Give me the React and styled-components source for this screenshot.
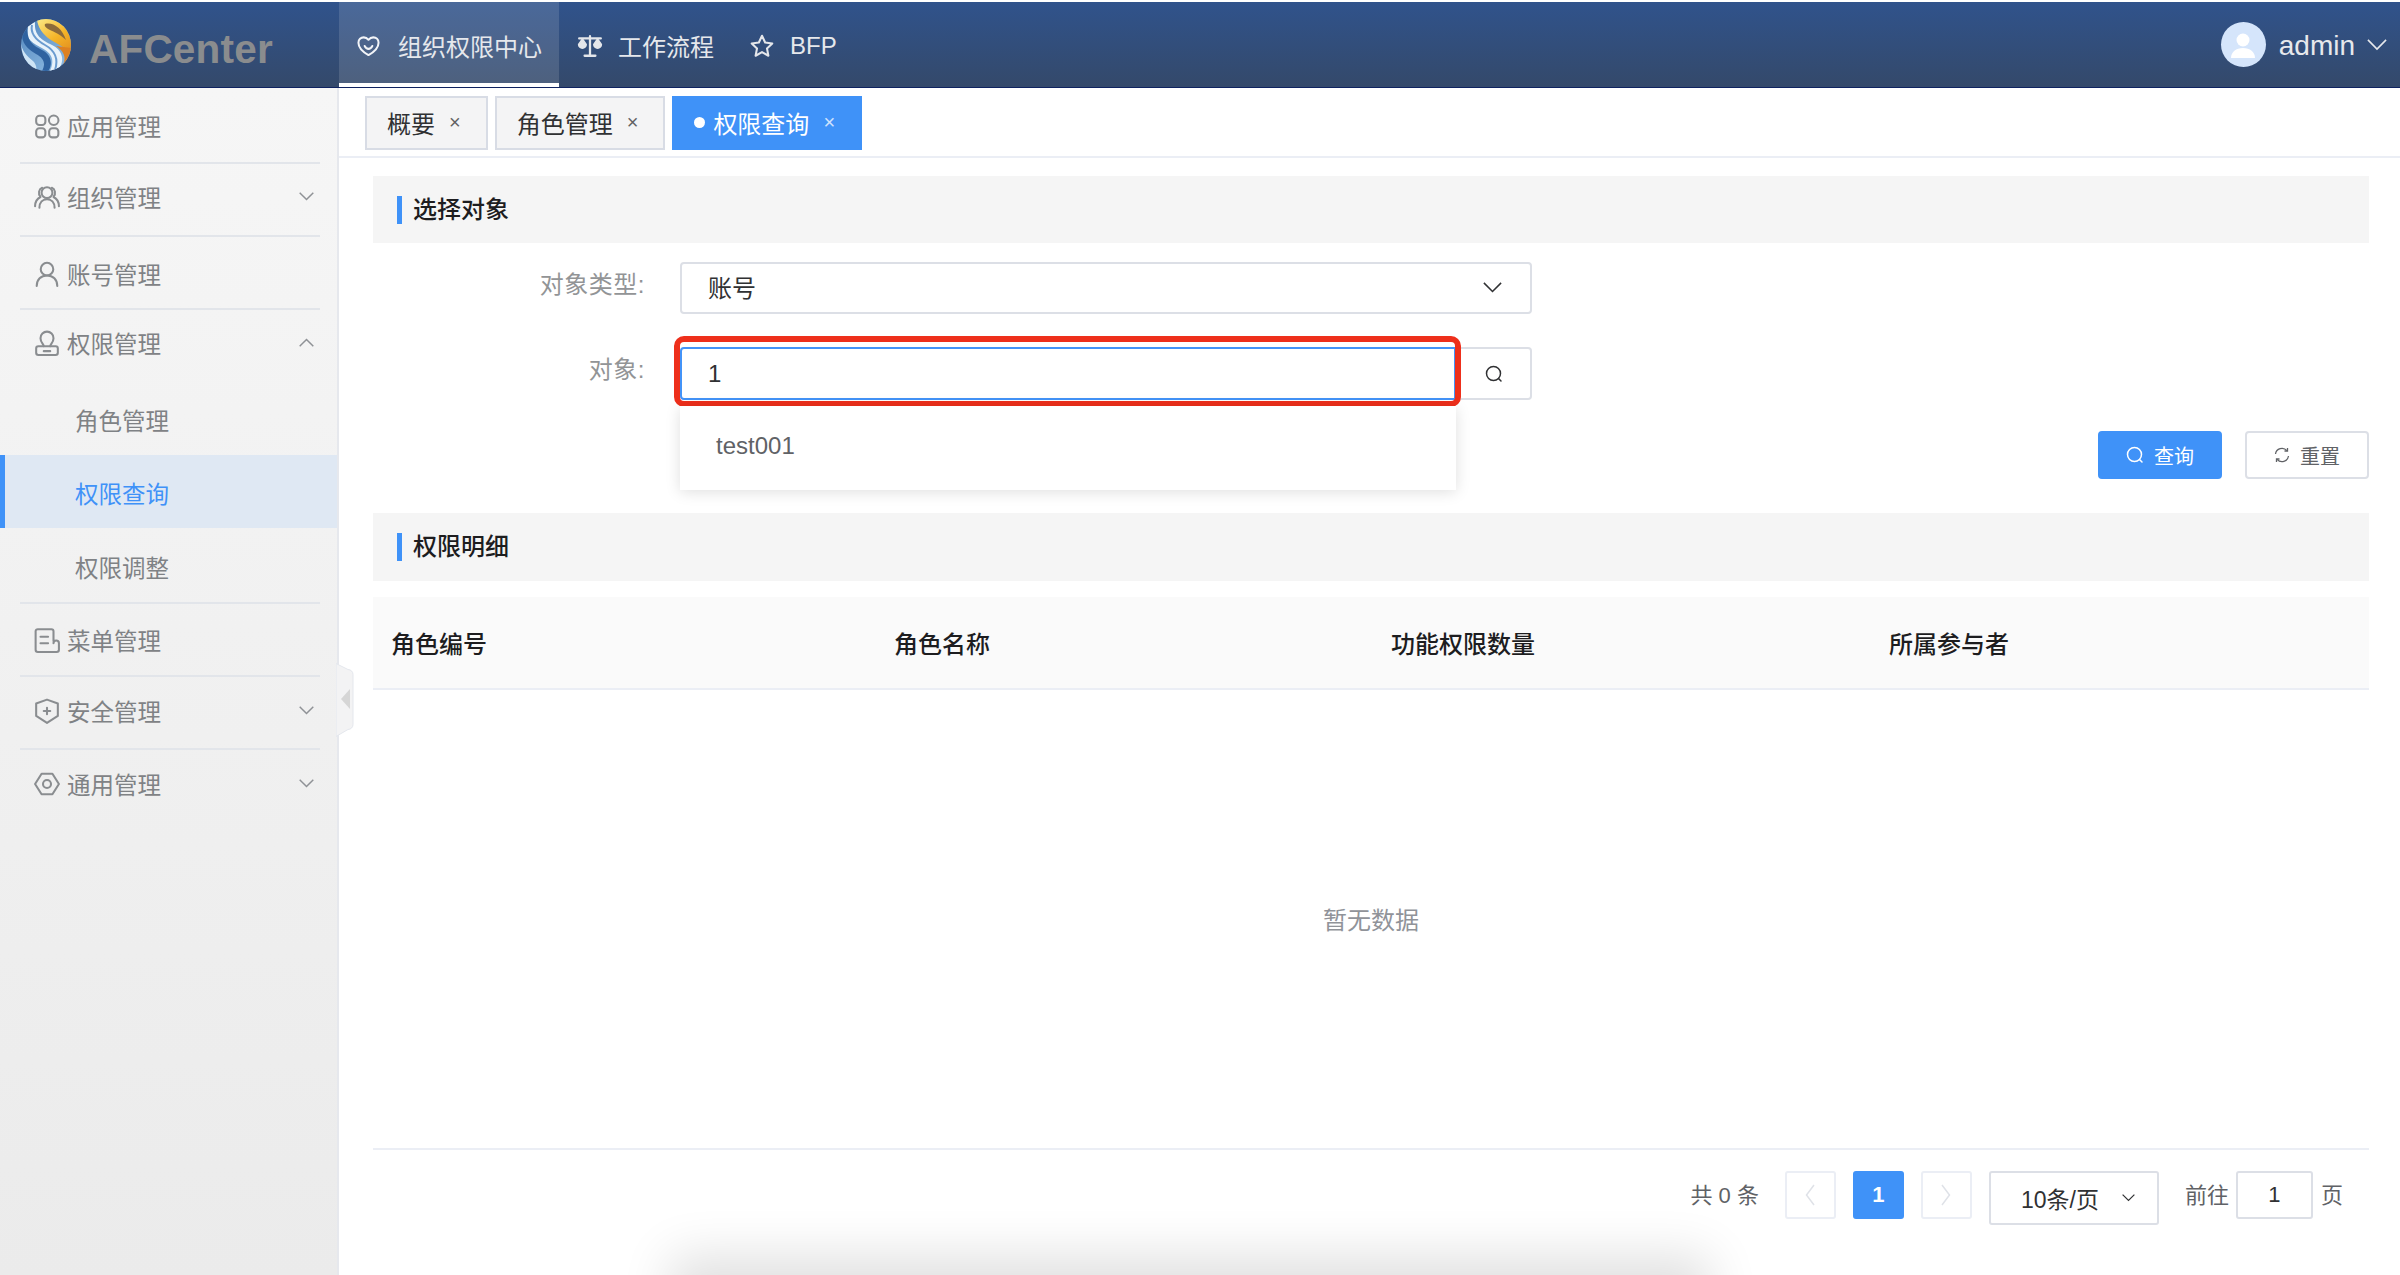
import React from "react";
import styled, { createGlobalStyle } from "styled-components";

const Global = createGlobalStyle`
  html, body {
    margin: 0;
    padding: 0;
    background: #fff;
    overflow: hidden;
  }
  body {
    font-family: "Liberation Sans", "Noto Sans CJK SC", sans-serif;
    font-size: 24px;
    color: #303133;
  }
  * {
    box-sizing: border-box;
  }
`;

const LogoMark = () => (
  <svg width="52" height="54" viewBox="0 0 52 54">
    <defs>
      <clipPath id="ball">
        <ellipse cx="26" cy="27" rx="25" ry="26" />
      </clipPath>
      <linearGradient id="gold" x1="0.2" y1="0" x2="0.8" y2="1">
        <stop offset="0" stopColor="#fbe27a" />
        <stop offset="0.5" stopColor="#f4b428" />
        <stop offset="1" stopColor="#e08a1e" />
      </linearGradient>
      <linearGradient id="sky" x1="0" y1="0" x2="0.8" y2="1">
        <stop offset="0" stopColor="#4f83bb" />
        <stop offset="1" stopColor="#8fbce4" />
      </linearGradient>
    </defs>
    <g clipPath="url(#ball)">
      <rect width="52" height="54" fill="url(#sky)" />
      <path d="M17 2C24-2 44 0 52 20v20C46 28 36 26 28 20C22 15 18 9 17 2z" fill="url(#gold)" />
      <path d="M25 6c8-2 17 4 21 16c-6-6-12-8-16-10c-4-2-6-4-5-6z" fill="#8c6a3a" />
      <path d="M36 28c10 6 12 16 2 25l14 1V30z" fill="#dd8122" />
      <path d="M8 8C4 18 10 24 20 29c10 5 16 11 10 24l8-1c8-10 4-20-6-25C22 22 14 18 15 4z" fill="#e8f2fa" />
      <path d="M12 7C10 16 16 22 25 27c9 5 14 13 10 25" fill="none" stroke="#6a9bcf" strokeWidth="2" />
      <path d="M2 18c1 10 8 14 14 18c8 4 10 10 6 17l6 1c6-10 2-18-6-22C12 27 6 22 8 8z" fill="#2f62a0" />
      <path d="M1 26c2 10 9 14 13 18c2 3 3 6 2 9C8 50 2 40 1 26z" fill="#cfe4f5" />
    </g>
  </svg>
);

const HeartIcon = () => (
  <svg width="26" height="26" viewBox="0 0 24 24" fill="none" stroke="#f2f4f8" strokeWidth="2.1" strokeLinecap="round" strokeLinejoin="round">
    <path d="M12 21.5C6 18 1.5 14 1.5 8.5C1.5 5 4 3 7 3c2 0 3.800 1 5 2.500C13.200 4 15 3 17 3c3 0 5.500 2 5.500 5.500C22.500 14 18 18 12 21.500z" />
    <path d="M8 12c1 2 2.500 3 4 3s3-1 4-3" />
  </svg>
);

const ScaleIcon = () => (
  <svg width="26" height="26" viewBox="0 0 24 24" fill="none" stroke="#e4e6ea" strokeWidth="2.1" strokeLinecap="round" strokeLinejoin="round">
    <path d="M2 5h20M12 3v18M7 21h10" />
    <path d="M1.500 10.500a3.500 3.500 0 0 0 7 0L5 5.500zM15.500 10.500a3.500 3.500 0 0 0 7 0L19 5.500z" fill="#e4e6ea" strokeWidth="1.400" />
  </svg>
);

const StarIcon = () => (
  <svg width="26" height="26" viewBox="0 0 24 24" fill="none" stroke="#e4e6ea" strokeWidth="1.900" strokeLinejoin="round">
    <path d="M12 2.500l2.900 6.300 6.600.8-4.900 4.600 1.300 6.800L12 17.600 6.100 21l1.300-6.800L2.500 9.600l6.600-.8z" />
  </svg>
);

const MenuSvg = ({ children }) => (
  <svg width="26" height="26" viewBox="0 0 24 24" fill="none" stroke="#8a8d90" strokeWidth="1.900" strokeLinecap="round" strokeLinejoin="round">
    {children}
  </svg>
);

const menuIcons = {
  apps: (
    <>
      <rect x="2" y="2.500" width="8.500" height="8.500" rx="3" />
      <rect x="2" y="14" width="8.500" height="8.500" rx="3" />
      <rect x="14" y="14" width="8.500" height="8.500" rx="3" />
      <circle cx="18.200" cy="6.700" r="4.400" />
    </>
  ),
  team: (
    <>
      <circle cx="12" cy="8" r="5" />
      <path d="M5 22c0-5 3-8 7-8s7 3 7 8" />
      <path d="M7.500 3.500C4.500 4.500 3.500 9 6 12c-3 1.500-5 4.500-5 8.500M16.500 3.500c3 1 4 5.500 1.500 8.500 3 1.500 5 4.500 5 8.500" />
    </>
  ),
  user: (
    <>
      <circle cx="12" cy="7.500" r="5.800" />
      <path d="M2.500 23c0-6 4-9.700 9.500-9.700s9.500 3.700 9.500 9.700" />
    </>
  ),
  stamp: (
    <>
      <path d="M9 15c0-2-3-3.500-3-7.500a6 6 0 0 1 12 0c0 4-3 5.500-3 7.500" />
      <rect x="2" y="15" width="20" height="8" rx="2" />
      <path d="M9 19.500h6" />
    </>
  ),
  doc: (
    <>
      <path d="M18 13V4a2 2 0 0 0-2-2H3.500a2 2 0 0 0-2 2v17a2 2 0 0 0 2 2H21a2 2 0 0 0 2-2v-6a2 2 0 0 0-5 0" />
      <path d="M6 9h7M6 15h7" />
    </>
  ),
  shield: (
    <>
      <path d="M12 1.500l10 3.500v11.500L12 23 2 16.500V5z" />
      <path d="M12 9v6M9 12h6" />
    </>
  ),
  nut: (
    <>
      <path d="M7 2.500h10l6 9.500-6 9.500H7L1 12z" />
      <circle cx="12" cy="12" r="3.700" />
    </>
  ),
};

const Chevron = ({ up, size = 15, color = "#8f9296", width = 1.5 }) => (
  <svg width={size} height={size * 0.6} viewBox="0 0 15 9" fill="none" stroke={color} strokeWidth={width}>
    <path d={up ? "M.7 8.300 7.500 1.500l6.800 6.800" : "M.7.700l6.800 6.800L14.300.700"} />
  </svg>
);

const SearchIcon = ({ color }) => (
  <svg width="18" height="18" viewBox="0 0 18 18" fill="none" stroke={color} strokeWidth="1.500" strokeLinecap="round">
    <circle cx="8.500" cy="8.500" r="7" />
    <path d="M13.500 13.500l2.500 2.500" />
  </svg>
);

const RefreshIcon = () => (
  <svg width="16" height="16" viewBox="0 0 16 16" fill="none" stroke="#606266" strokeWidth="1.300">
    <path d="M1.500 7a6.500 6.500 0 0 1 11.400-3.300" />
    <path d="M14.500 9a6.500 6.500 0 0 1-11.400 3.300" />
    <path d="M13.500 1v3h-3M2.500 15v-3h3" />
  </svg>
);

const menu = [
  { label: "应用管理", icon: "apps", lift: 1 },
  { label: "组织管理", icon: "team", arrow: "down", lift: 6 },
  { label: "账号管理", icon: "user", drop: 2 },
  { label: "权限管理", icon: "stamp", arrow: "up", lift: 6, noLine: true },
  { label: "角色管理", sub: true, drop: 3, noLine: true },
  { label: "权限查询", sub: true, active: true, drop: 2, noLine: true },
  { label: "权限调整", sub: true, drop: 3, tall: true },
  { label: "菜单管理", icon: "doc" },
  { label: "安全管理", icon: "shield", arrow: "down", lift: 4 },
  { label: "通用管理", icon: "nut", arrow: "down", lift: 4, noLine: true },
];

const columns = ["角色编号", "角色名称", "功能权限数量", "所属参与者"];

export default function App() {
  return (
    <Page>
      <Global />
      <Header>
        <Brand>
          <LogoMark />
          <BrandName>AFCenter</BrandName>
        </Brand>
        <Nav>
          <NavItem $active>
            <HeartIcon />
            组织权限中心
          </NavItem>
          <NavItem>
            <ScaleIcon />
            工作流程
          </NavItem>
          <NavItem>
            <StarIcon />
            BFP
          </NavItem>
        </Nav>
        <Account>
          <Avatar>
            <svg width="30" height="30" viewBox="0 0 30 30" fill="#fff">
              <circle cx="15" cy="9" r="6.500" />
              <path d="M3 27c0-6 5-10 12-10s12 4 12 10z" />
            </svg>
          </Avatar>
          <AccountName>admin</AccountName>
          <Chevron size={20} color="#e6e8ec" width={1.2} />
        </Account>
      </Header>
      <Main>
        <Sidebar>
          {menu.map((item) => (
            <MenuRow
              key={item.label}
              $active={item.active}
              $sub={item.sub}
              $noLine={item.noLine}
              $tall={item.tall}
              $lift={item.lift}
              $drop={item.drop}
            >
              {item.icon && <MenuSvg>{menuIcons[item.icon]}</MenuSvg>}
              {item.label}
              {item.arrow && (
                <MenuArrow>
                  <Chevron up={item.arrow === "up"} />
                </MenuArrow>
              )}
            </MenuRow>
          ))}
          <Collapse>
            <svg width="18" height="74" viewBox="0 0 18 74">
              <path d="M0 .5l12 6a5 5 0 0 1 5 5v50a5 5 0 0 1-5 5L0 73.500z" fill="#f3f3f4" stroke="#e4e7ed" />
              <path d="M14 26v20L5 36z" fill="#d6d6d6" />
            </svg>
          </Collapse>
        </Sidebar>
        <Content>
          <TabBar>
            <Tab>
              概要
              <TabClose>×</TabClose>
            </Tab>
            <Tab>
              角色管理
              <TabClose>×</TabClose>
            </Tab>
            <Tab $active>
              <TabDot />
              权限查询
              <TabClose>×</TabClose>
            </Tab>
          </TabBar>
          <Body>
            <SectionBar>
              <SectionTitle>选择对象</SectionTitle>
            </SectionBar>
            <FormRow>
              <FormLabel>对象类型:</FormLabel>
              <SelectBox>
                <SelectValue>账号</SelectValue>
                <Chevron size={19} color="#303133" width={1.2} />
              </SelectBox>
            </FormRow>
            <FormRow $gap={33}>
              <FormLabel>对象:</FormLabel>
              <SearchField>
                <SearchInput>1</SearchInput>
                <SearchButton>
                  <SearchIcon color="#303133" />
                </SearchButton>
                <Highlight />
                <Suggestions>test001</Suggestions>
              </SearchField>
            </FormRow>
            <Actions>
              <ActionButton $primary>
                <SearchIcon color="#fff" />
                查询
              </ActionButton>
              <ActionButton>
                <RefreshIcon />
                重置
              </ActionButton>
            </Actions>
            <SectionBar $detail>
              <SectionTitle>权限明细</SectionTitle>
            </SectionBar>
            <TableHead>
              {columns.map((name) => (
                <span key={name}>{name}</span>
              ))}
            </TableHead>
            <EmptyState>暂无数据</EmptyState>
            <Pagination>
              <Total>共 0 条</Total>
              <PageButton>
                <svg width="10" height="22" viewBox="0 0 10 22" fill="none" stroke="#dfe2e8" strokeWidth="1.500">
                  <path d="M9 1L1.500 11 9 21" />
                </svg>
              </PageButton>
              <PageButton $current>1</PageButton>
              <PageButton>
                <svg width="10" height="22" viewBox="0 0 10 22" fill="none" stroke="#dfe2e8" strokeWidth="1.500">
                  <path d="M1 1l7.500 10L1 21" />
                </svg>
              </PageButton>
              <PageSize>
                10条/页
                <Chevron size={13} color="#303133" width={1.4} />
              </PageSize>
              <JumpText>前往</JumpText>
              <JumpInput>1</JumpInput>
              <JumpText>页</JumpText>
            </Pagination>
          </Body>
        </Content>
      </Main>
      <BottomGlow />
    </Page>
  );
}

const Page = styled.div`
  display: flex;
  flex-direction: column;
  height: 1275px;
  overflow: hidden;
  padding-top: 2px;
  position: relative;
  width: 2400px;
`;

const Header = styled.header`
  align-items: stretch;
  background: linear-gradient(#30538c, #34496a);
  border-bottom: 1px solid #0e2260;
  display: flex;
  flex: none;
  height: 86px;
`;

const Brand = styled.div`
  align-items: center;
  display: flex;
  flex: none;
  gap: 17px;
  padding-left: 20px;
  width: 339px;
`;

const BrandName = styled.span`
  color: #8a8c8e;
  font-size: 40.500px;
  font-weight: 700;
  letter-spacing: 0.200px;
  padding-top: 10px;
`;

const Nav = styled.nav`
  display: flex;
`;

const NavItem = styled.div`
  align-items: center;
  background: ${({ $active }) => ($active ? "rgba(255, 255, 255, 0.13)" : "none")};
  border-bottom: ${({ $active }) => ($active ? "4px solid #fff" : "4px solid transparent")};
  color: #e6e8ec;
  display: flex;
  font-size: 24px;
  gap: ${({ $active }) => ($active ? "18px" : "15px")};
  padding: 6px 17px 0 18px;
  white-space: nowrap;
  width: ${({ $active }) => ($active ? "220px" : "auto")};
`;

const Account = styled.div`
  align-items: center;
  display: flex;
  margin-left: auto;
  padding-right: 13px;
`;

const Avatar = styled.div`
  align-items: flex-end;
  background: #d5e5fb;
  border-radius: 50%;
  display: flex;
  height: 45px;
  justify-content: center;
  overflow: hidden;
  padding-bottom: 6px;
  width: 45px;
`;

const AccountName = styled.span`
  color: #e6e8ec;
  font-size: 28px;
  margin: 0 12px 0 13px;
  padding-top: 2px;
`;

const Main = styled.div`
  display: flex;
  flex: 1;
  min-height: 0;
`;

const Sidebar = styled.aside`
  background: linear-gradient(#f6f6f6, #ebebeb);
  border-right: 2px solid #e6e8ed;
  flex: none;
  padding-top: 2px;
  position: relative;
  width: 339px;
`;

const MenuRow = styled.div`
  align-items: center;
  background: ${({ $active }) => ($active ? "#dfe8f3" : "none")};
  color: ${({ $active }) => ($active ? "#3f92f8" : "#7f8285")};
  display: flex;
  font-size: 23.500px;
  gap: 7px;
  height: ${({ $tall }) => ($tall ? "75px" : "73px")};
  padding: ${({ $drop }) => $drop || 0}px 0 ${({ $lift }) => $lift || 0}px ${({ $sub }) => ($sub ? "75px" : "34px")};
  position: relative;
  &::before {
    background: #3f92f8;
    bottom: 0;
    content: "";
    display: ${({ $active }) => ($active ? "block" : "none")};
    left: 0;
    position: absolute;
    top: 0;
    width: 5px;
  }
  &::after {
    background: #e2e5ea;
    bottom: -1px;
    content: "";
    display: ${({ $noLine }) => ($noLine ? "none" : "block")};
    height: 2px;
    left: 20px;
    position: absolute;
    right: 17px;
  }
`;

const MenuArrow = styled.span`
  display: flex;
  margin-left: auto;
  padding-right: 23px;
`;

const Collapse = styled.div`
  display: flex;
  left: 336px;
  position: absolute;
  top: 575px;
`;

const Content = styled.div`
  display: flex;
  flex: 1;
  flex-direction: column;
  min-width: 0;
`;

const TabBar = styled.div`
  align-items: flex-start;
  border-bottom: 2px solid #ebeef5;
  display: flex;
  flex: none;
  gap: 7px;
  height: 70px;
  padding: 8px 0 0 26px;
`;

const Tab = styled.div`
  align-items: center;
  background: ${({ $active }) => ($active ? "#3f92f8" : "#f4f4f5")};
  border: 2px solid ${({ $active }) => ($active ? "#3f92f8" : "#d8dce5")};
  color: ${({ $active }) => ($active ? "#fff" : "#303133")};
  display: flex;
  font-size: 24px;
  height: 54px;
  padding: 0 25px 2px 20px;
`;

const TabClose = styled.span`
  font-size: 20px;
  margin-left: 14px;
  opacity: 0.75;
`;

const TabDot = styled.span`
  background: #fff;
  border-radius: 50%;
  height: 11px;
  margin-right: 8px;
  width: 11px;
`;

const Body = styled.main`
  display: flex;
  flex: 1;
  flex-direction: column;
  min-height: 0;
  padding: 18px 31px 0 34px;
`;

const SectionBar = styled.div`
  align-items: center;
  background: #f5f5f5;
  display: flex;
  flex: none;
  height: ${({ $detail }) => ($detail ? "68px" : "67px")};
  margin-top: ${({ $detail }) => ($detail ? "34px" : "0")};
  padding-left: 24px;
`;

const SectionTitle = styled.h2`
  border-left: 5px solid #3f92f8;
  color: #1d1d1f;
  font-size: 24px;
  font-weight: 500;
  line-height: 28px;
  margin: 0;
  padding-left: 11px;
`;

const FormRow = styled.div`
  align-items: flex-start;
  display: flex;
  gap: 35px;
  margin-top: ${({ $gap }) => $gap || 19}px;
`;

const FormLabel = styled.label`
  color: #929496;
  font-size: 24px;
  letter-spacing: 0.5px;
  line-height: 46px;
  text-align: right;
  width: 272px;
`;

const SelectBox = styled.div`
  align-items: center;
  border: 2px solid #dcdfe6;
  border-radius: 4px;
  color: #303133;
  display: flex;
  height: 52px;
  justify-content: space-between;
  padding: 0 28px 0 26px;
  width: 852px;
`;

const SelectValue = styled.span`
  padding-bottom: 3px;
`;

const SearchField = styled.div`
  display: flex;
  position: relative;
  width: 852px;
`;

const SearchInput = styled.div`
  align-items: center;
  border: 2px solid #4393f8;
  border-radius: 4px 0 0 4px;
  color: #303133;
  display: flex;
  height: 53px;
  padding-left: 26px;
  width: 776px;
`;

const SearchButton = styled.div`
  align-items: center;
  border: 2px solid #dcdfe6;
  border-left: 0;
  border-radius: 0 4px 4px 0;
  display: flex;
  flex: 1;
  justify-content: center;
  padding-left: 2px;
`;

const Highlight = styled.div`
  border: 6px solid #ee2f1b;
  border-radius: 10px;
  height: 71px;
  left: -6px;
  pointer-events: none;
  position: absolute;
  top: -11px;
  width: 787px;
`;

const Suggestions = styled.div`
  align-items: center;
  background: #fff;
  box-shadow: 0 2px 14px rgba(0, 0, 0, 0.13);
  color: #606266;
  display: flex;
  height: 84px;
  left: 0;
  padding: 0 0 4px 36px;
  position: absolute;
  top: 59px;
  width: 776px;
`;

const Actions = styled.div`
  display: flex;
  gap: 23px;
  justify-content: flex-end;
  margin-top: 31px;
`;

const ActionButton = styled.div`
  align-items: center;
  background: ${({ $primary }) => ($primary ? "#3f92f8" : "#fff")};
  border: 2px solid ${({ $primary }) => ($primary ? "#3f92f8" : "#dcdfe6")};
  border-radius: 4px;
  color: ${({ $primary }) => ($primary ? "#fff" : "#606266")};
  display: flex;
  font-size: 20px;
  gap: 10px;
  height: 48px;
  justify-content: center;
  width: 124px;
`;

const TableHead = styled.div`
  align-items: center;
  background: #fafafa;
  border-bottom: 2px solid #ebeef5;
  color: #1d1d1f;
  display: grid;
  flex: none;
  font-weight: 500;
  grid-template-columns: 503px 497px 498px 1fr;
  height: 93px;
  margin-top: 16px;
  padding-left: 18px;
`;

const EmptyState = styled.div`
  align-items: center;
  border-bottom: 2px solid #ebeef5;
  color: #909399;
  display: flex;
  flex: none;
  height: 460px;
  justify-content: center;
  padding-bottom: 2px;
`;

const Pagination = styled.div`
  align-items: flex-start;
  display: flex;
  font-size: 22px;
  justify-content: flex-end;
  padding: 21px 26px 0 0;
`;

const Total = styled.span`
  color: #606266;
  line-height: 50px;
  margin-right: 26px;
`;

const PageButton = styled.div`
  align-items: center;
  background: ${({ $current }) => ($current ? "#3f92f8" : "#fff")};
  border: 2px solid ${({ $current }) => ($current ? "#3f92f8" : "#ebeef5")};
  border-radius: 3px;
  color: #fff;
  display: flex;
  font-weight: 700;
  height: 48px;
  justify-content: center;
  margin-right: 17px;
  width: 51px;
`;

const PageSize = styled.div`
  align-items: center;
  border: 2px solid #dcdfe6;
  border-radius: 3px;
  color: #303133;
  display: flex;
  font-size: 23px;
  gap: 23px;
  height: 54px;
  margin-right: 26px;
  padding: 0 0 0 30px;
  width: 170px;
`;

const JumpText = styled.span`
  color: #606266;
  line-height: 50px;
`;

const JumpInput = styled.div`
  align-items: center;
  border: 2px solid #dcdfe6;
  border-radius: 3px;
  color: #303133;
  display: flex;
  height: 48px;
  justify-content: center;
  margin: 0 8px 0 7px;
  width: 77px;
`;

const BottomGlow = styled.div`
  bottom: -70px;
  box-shadow: 0 0 50px 20px rgba(0, 0, 0, 0.12);
  height: 70px;
  left: 690px;
  position: absolute;
  width: 1000px;
`;
